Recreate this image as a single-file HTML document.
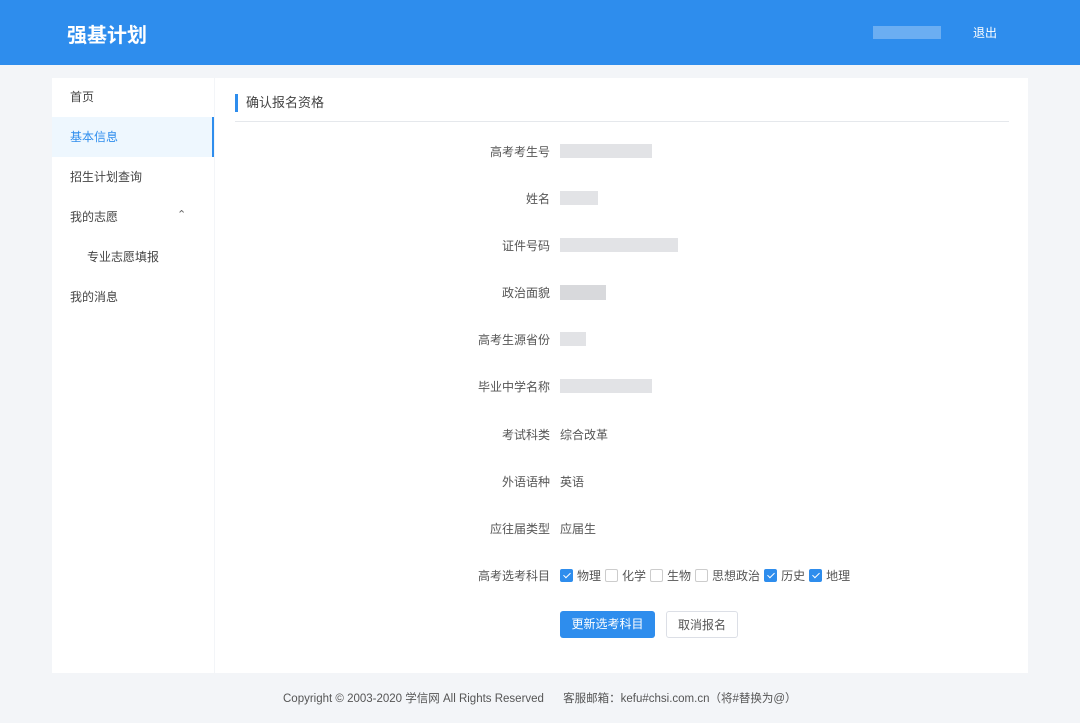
<!DOCTYPE html>
<html><head><meta charset="utf-8"><style>
*{margin:0;padding:0;box-sizing:border-box}
body{width:1080px;height:723px;background:#f3f5f8;font-family:"Liberation Sans","Noto Sans CJK SC",sans-serif;color:#555;font-size:12px;position:relative;overflow:hidden}
.hd{position:absolute;left:0;top:0;width:1080px;height:65px;background:#2e8ded}
.logo{position:absolute;left:67px;top:19px;color:#fff;font-size:20px;font-weight:bold}
.user{position:absolute;left:873px;top:26px;width:68px;height:13px;background:#7ab6f2;opacity:.8}
.out{position:absolute;left:973px;top:24px;color:#fff;font-size:12px}
.side{position:absolute;left:52px;top:78px;width:162px;height:595px;background:#fff}
.side .it{position:absolute;left:18px;font-size:12px;color:#444}
.side .act{position:absolute;left:0;top:39px;width:162px;height:40px;background:#eef7fe;border-right:2px solid #2e8ded}
.main{position:absolute;left:215px;top:78px;width:813px;height:595px;background:#fff}
.ttl{position:absolute;left:20px;top:16px;border-left:3px solid #2e8ded;padding-left:8px;height:18px;line-height:17px;font-size:13px;color:#444}
.line{position:absolute;left:20px;top:43px;width:774px;height:1px;background:#e5e8ec}
.lb{position:absolute;width:150px;left:400px;text-align:right;font-size:12px;color:#555}
.v{position:absolute;left:560px;font-size:12px;color:#555}
.bl{position:absolute;left:560px;height:14px;background:#e2e3e6}
.cb{display:inline-block;width:13px;height:13px;border:1px solid #ccc;border-radius:2px;vertical-align:-2px;margin-right:4px;background:#fff;position:relative}
.cb.on{background:#2e8ded;border-color:#2e8ded}
.cb.on:after{content:"";position:absolute;left:3.5px;top:1px;width:3px;height:6px;border:solid #fff;border-width:0 1.5px 1.5px 0;transform:rotate(45deg)}
.opt{margin-right:4px}
.btn{position:absolute;top:611px;height:27px;line-height:26px;text-align:center;font-size:12px;border-radius:3px}
.ft{position:absolute;top:690px;left:283px;font-size:11.5px;color:#555;white-space:nowrap}
</style></head><body>
<div class="hd"><div class="logo">强基计划</div><div class="user"></div><div class="out">退出</div></div>
<div class="side">
<div class="act"></div>
<div class="it" style="top:10px">首页</div>
<div class="it" style="top:50px;color:#2e8ded">基本信息</div>
<div class="it" style="top:90px">招生计划查询</div>
<div class="it" style="top:130px">我的志愿</div>
<div class="it" style="top:130px;left:125px;font-size:11px;color:#666">&#8963;</div>
<div class="it" style="top:170px;left:35px">专业志愿填报</div>
<div class="it" style="top:210px">我的消息</div>
</div>
<div class="main"><div class="ttl">确认报名资格</div><div class="line"></div></div>
<div class="lb" style="top:143px">高考考生号</div><div class="bl" style="top:144px;width:92px"></div>
<div class="lb" style="top:190px">姓名</div><div class="bl" style="top:191px;width:38px"></div>
<div class="lb" style="top:237px">证件号码</div><div class="bl" style="top:238px;width:118px"></div>
<div class="lb" style="top:284px">政治面貌</div><div class="bl" style="top:285px;width:46px;height:15px;background:#d8d9dc"></div>
<div class="lb" style="top:331px">高考生源省份</div><div class="bl" style="top:332px;width:26px"></div>
<div class="lb" style="top:378px">毕业中学名称</div><div class="bl" style="top:379px;width:92px"></div>
<div class="lb" style="top:426px">考试科类</div><div class="v" style="top:426px">综合改革</div>
<div class="lb" style="top:473px">外语语种</div><div class="v" style="top:473px">英语</div>
<div class="lb" style="top:520px">应往届类型</div><div class="v" style="top:520px">应届生</div>
<div class="lb" style="top:567px">高考选考科目</div>
<div class="v" style="top:567px"><span class="cb on"></span><span class="opt">物理</span><span class="cb"></span><span class="opt">化学</span><span class="cb"></span><span class="opt">生物</span><span class="cb"></span><span class="opt">思想政治</span><span class="cb on"></span><span class="opt">历史</span><span class="cb on"></span>地理</div>
<div class="btn" style="left:560px;width:95px;background:#2e8ded;color:#fff">更新选考科目</div>
<div class="btn" style="left:666px;width:72px;border:1px solid #dcdfe6;color:#555;background:#fff">取消报名</div>
<div class="ft">Copyright © 2003-2020 学信网 All Rights Reserved &nbsp;&nbsp;&nbsp;&nbsp;&nbsp;客服邮箱：kefu#chsi.com.cn（将#替换为@）</div>
</body></html>
